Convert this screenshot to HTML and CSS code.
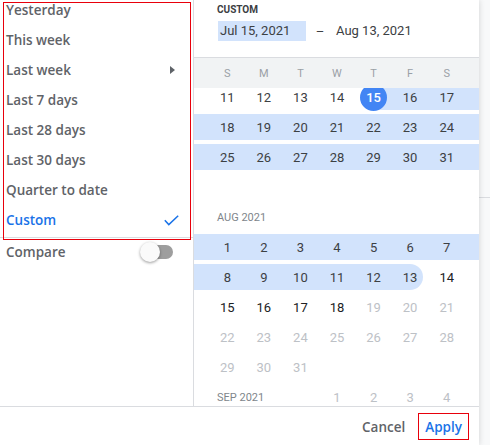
FILE: index.html
```html
<!DOCTYPE html>
<html lang="en">
<head>
<meta charset="utf-8">
<title>Date range picker</title>
<link rel="stylesheet" href="styles.css">
</head>
<body>
<div class="card">
  <div class="main">
    <aside class="side">
      <div class="menu">
        <ul class="menu-list">
          <li class="item">Yesterday</li>
          <li class="item">This week</li>
          <li class="item">Last week
            <svg class="arrow" viewBox="0 0 5 8" width="5" height="8"><polygon points="0,0 5,4 0,8"/></svg>
          </li>
          <li class="item">Last 7 days</li>
          <li class="item">Last 28 days</li>
          <li class="item">Last 30 days</li>
          <li class="item">Quarter to date</li>
          <li class="item selected">Custom
            <svg class="check" viewBox="0 0 15 11" width="15" height="11"><polyline points="0.8,5.3 4.8,9.6 14.2,0.8"/></svg>
          </li>
        </ul>
      </div>
      <div class="compare">
        <span>Compare</span>
        <span class="toggle"><span class="thumb"></span></span>
      </div>
    </aside>
    <section class="cal">
      <div class="range">
        <div class="label">CUSTOM</div>
        <div class="inputs">
          <span class="field active">Jul 15, 2021</span>
          <span class="dash">–</span>
          <span class="field">Aug 13, 2021</span>
        </div>
      </div>
      <div class="dow">
        <span>S</span><span>M</span><span>T</span><span>W</span><span>T</span><span>F</span><span>S</span>
      </div>
      <div class="weeks">
        <div class="weeks-inner">
          <div class="week band-from-thu">
            <span class="day">11</span><span class="day">12</span><span class="day">13</span><span class="day">14</span><span class="day"><span class="start">15</span></span><span class="day">16</span><span class="day">17</span>
          </div>
          <div class="week band-full">
            <span class="day">18</span><span class="day">19</span><span class="day">20</span><span class="day">21</span><span class="day">22</span><span class="day">23</span><span class="day">24</span>
          </div>
          <div class="week band-full">
            <span class="day">25</span><span class="day">26</span><span class="day">27</span><span class="day">28</span><span class="day">29</span><span class="day">30</span><span class="day">31</span>
          </div>
          <div class="week"></div>
          <div class="week">
            <span class="month">AUG 2021</span>
          </div>
          <div class="week band-full">
            <span class="day">1</span><span class="day">2</span><span class="day">3</span><span class="day">4</span><span class="day">5</span><span class="day">6</span><span class="day">7</span>
          </div>
          <div class="week band-to-fri">
            <span class="day">8</span><span class="day">9</span><span class="day">10</span><span class="day">11</span><span class="day">12</span><span class="day">13</span><span class="day dark">14</span>
          </div>
          <div class="week">
            <span class="day dark">15</span><span class="day dark">16</span><span class="day dark">17</span><span class="day dark">18</span><span class="day future">19</span><span class="day future">20</span><span class="day future">21</span>
          </div>
          <div class="week">
            <span class="day future">22</span><span class="day future">23</span><span class="day future">24</span><span class="day future">25</span><span class="day future">26</span><span class="day future">27</span><span class="day future">28</span>
          </div>
          <div class="week">
            <span class="day future">29</span><span class="day future">30</span><span class="day future">31</span>
          </div>
          <div class="week">
            <span class="month short">SEP 2021</span><span class="day future">1</span><span class="day future">2</span><span class="day future">3</span><span class="day future">4</span>
          </div>
        </div>
      </div>
    </section>
  </div>
  <div class="footer">
    <button class="btn">Cancel</button>
    <button class="btn primary">Apply</button>
  </div>
</div>
<div class="gutter"><div class="gutter-line"></div></div>
</body>
</html>
```

FILE: styles.css
```css
* { box-sizing: border-box; }

html, body {
  margin: 0;
  padding: 0;
}

body {
  width: 490px;
  height: 445px;
  overflow: hidden;
  display: flex;
  background: #f8f9fa;
  font-family: Roboto, "Liberation Sans", sans-serif;
}

.card {
  width: 479px;
  height: 445px;
  flex: none;
  background: #fff;
  display: flex;
  flex-direction: column;
  position: relative;
  z-index: 1;
  box-shadow: 0 0 6px rgba(0, 0, 0, 0.16);
}

.main {
  height: 406px;
  display: flex;
}

/* ---------- left side ---------- */
.side {
  width: 194px;
  flex: none;
  border-right: 1px solid #dadce0;
}

.menu {
  position: relative;
  border-bottom: 1px solid #dadce0;
}

.menu::after {
  content: "";
  position: absolute;
  left: 3px;
  top: 2px;
  width: 186px;
  height: 236px;
  border: 1px solid #e8000b;
  pointer-events: none;
}

.menu-list {
  list-style: none;
  margin: 0;
  padding: 0;
  height: 237px;
  overflow: hidden;
}

.item {
  height: 30px;
  display: flex;
  align-items: center;
  justify-content: space-between;
  padding-left: 6px;
  font-family: "Open Sans", "Liberation Sans", sans-serif;
  font-weight: 600;
  font-size: 13.5px;
  color: #5f6368;
}

.item:first-child {
  margin-top: -5px;
}

.item.selected {
  color: #1a73e8;
}

.arrow {
  margin-right: 18px;
  fill: #5f6368;
}

.check {
  margin-right: 14px;
  fill: none;
  stroke: #1a73e8;
  stroke-width: 1.5;
}

.compare {
  height: 27px;
  display: flex;
  align-items: center;
  justify-content: space-between;
  padding: 0 20px 0 6px;
  font-family: "Open Sans", "Liberation Sans", sans-serif;
  font-weight: 600;
  font-size: 13.5px;
  color: #5f6368;
}

.toggle {
  position: relative;
  width: 30px;
  height: 14px;
  border-radius: 7px;
  background: #9e9e9e;
}

.thumb {
  position: absolute;
  left: -3px;
  top: -3px;
  width: 20px;
  height: 20px;
  border-radius: 50%;
  background: #fafafa;
  box-shadow: 0 1px 3px rgba(0, 0, 0, 0.4);
}

/* ---------- calendar ---------- */
.cal {
  flex: 1;
  min-width: 0;
  display: flex;
  flex-direction: column;
  overflow: hidden;
}

.range {
  height: 58px;
  flex: none;
  padding: 4px 0 0 23px;
  border-bottom: 1px solid #dadce0;
}

.label {
  font-size: 10px;
  line-height: 12px;
  font-weight: 700;
  color: #3c4043;
}

.inputs {
  display: flex;
  align-items: center;
  margin: 5px 0 0 1px;
}

.field {
  width: 88px;
  height: 20px;
  line-height: 20px;
  padding: 0 2px;
  font-size: 13px;
  color: #3c4043;
}

.field.active {
  background: #d2e3fc;
}

.dash {
  width: 28px;
  text-align: center;
  font-size: 13px;
  color: #3c4043;
}

.dow {
  height: 30px;
  flex: none;
  display: grid;
  grid-template-columns: repeat(7, 1fr);
  align-items: center;
  padding: 0 14px 0 15px;
  background: #f1f3f4;
  font-size: 11px;
  color: #9aa0a6;
  text-align: center;
}

.weeks {
  flex: 1;
  overflow: hidden;
}

.weeks-inner {
  margin-top: -6px;
}

.week {
  position: relative;
  height: 30px;
  display: grid;
  grid-template-columns: repeat(7, 1fr);
  align-items: center;
  padding: 0 14px 0 15px;
  font-size: 13px;
  color: #3c4043;
}

.band-full::before,
.band-from-thu::before,
.band-to-fri::before {
  content: "";
  position: absolute;
  top: 2px;
  bottom: 2px;
  left: 0;
  right: 0;
  background: #d2e3fc;
}

.band-from-thu::before {
  left: calc(15px + (100% - 29px) * 0.642857);
}

.band-to-fri::before {
  right: calc(100% - 28px - (100% - 29px) * 0.785714);
  border-radius: 0 13px 13px 0;
}

.day {
  position: relative;
  z-index: 1;
  text-align: center;
}

.day.dark {
  color: #202124;
}

.day.future {
  color: #bdc1c6;
}

.start {
  display: inline-block;
  width: 27px;
  height: 27px;
  line-height: 27px;
  border-radius: 50%;
  background: #4285f4;
  color: #fff;
  font-weight: 500;
}

.month {
  grid-column: 1 / -1;
  padding-left: 8px;
  font-size: 11px;
  color: #80868b;
}

.month.short {
  grid-column: 1 / span 3;
}

/* ---------- footer ---------- */
.footer {
  height: 39px;
  flex: none;
  border-top: 1px solid #dadce0;
  display: flex;
  justify-content: flex-end;
  align-items: center;
  gap: 6px;
  padding-right: 10px;
}

.btn {
  height: 27px;
  padding: 2px 6px 0;
  border: 1px solid transparent;
  background: none;
  font-family: "Open Sans", "Liberation Sans", sans-serif;
  font-weight: 600;
  font-size: 13.5px;
  color: #5f6368;
}

.btn.primary {
  color: #1a73e8;
  border-color: #e8000b;
}

/* ---------- background gutter ---------- */
.gutter {
  flex: 1;
}

.gutter-line {
  margin-top: 197px;
  height: 1px;
  background: #dadce0;
}
```
